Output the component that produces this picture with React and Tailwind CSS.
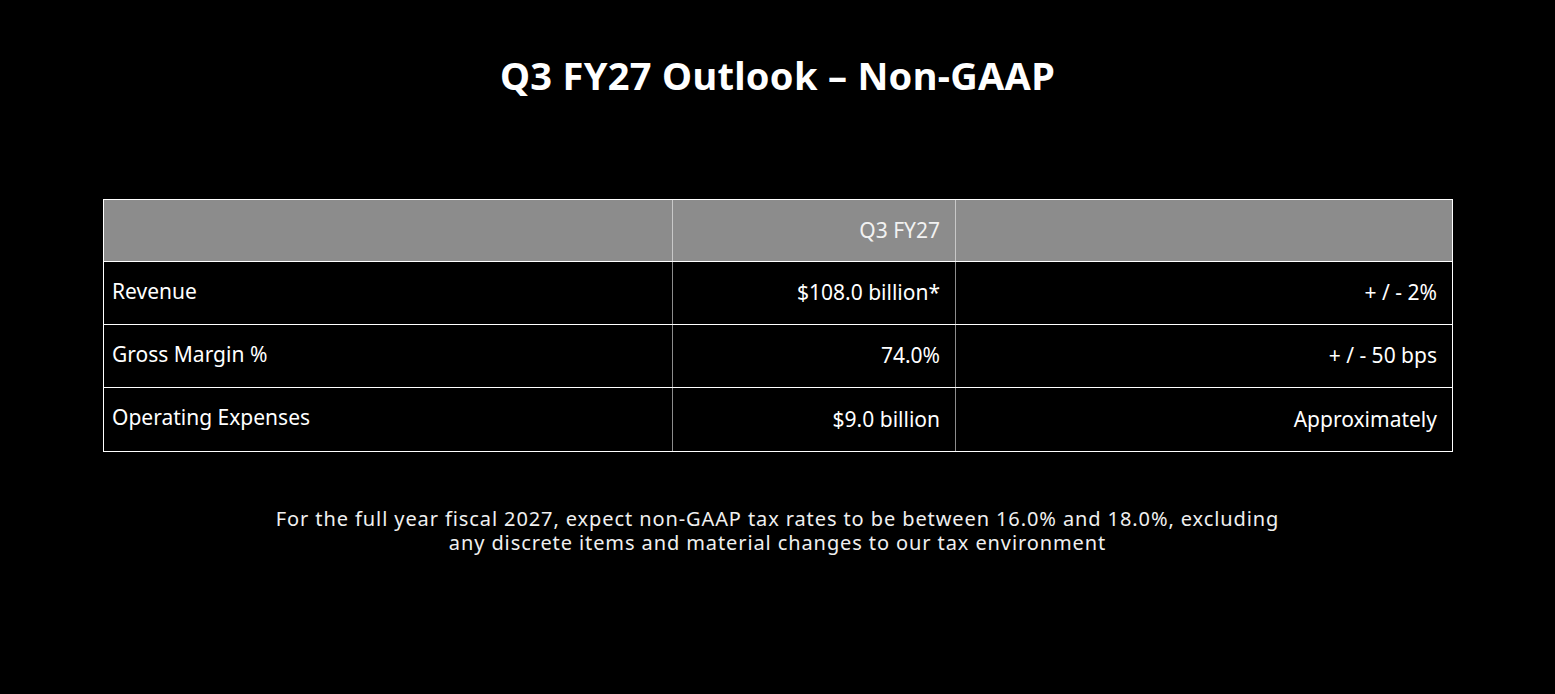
import React from 'react';

const rows = [
  { label: 'Revenue', value: '$108.0 billion*', note: '+ / - 2%' },
  { label: 'Gross Margin %', value: '74.0%', note: '+ / - 50 bps' },
  { label: 'Operating Expenses', value: '$9.0 billion', note: 'Approximately' },
];

export default function App() {
  return (
    <div className="min-h-[694px] w-full bg-black text-white font-['Noto_Sans','Liberation_Sans',sans-serif]">
      <h1 className="pt-[52px] text-center text-[38px] font-bold leading-[46px] tracking-[0.3px]">
        Q3 FY27 Outlook – Non-GAAP
      </h1>

      {/* outlook table */}
      <div className="mt-[101px] ml-[103px] w-[1350px] border border-white">
        <div className="grid grid-cols-[569px_283px_1fr] h-[62px] bg-[#8c8c8c] border-b border-white">
          <div className="border-r border-[#c8c8c8]" />
          <div className="border-r border-[#c8c8c8] flex items-center justify-end pr-[15px] text-[21px] text-[#f2f2f2]">
            Q3 FY27
          </div>
          <div />
        </div>
        {rows.map((r, i) => (
          <div
            key={r.label}
            className={`grid grid-cols-[569px_283px_1fr] h-[63px] ${i < rows.length - 1 ? 'border-b border-white' : ''}`}
          >
            <div className="border-r border-[#8c8c8c] flex items-center pl-[8px] pb-[3px] text-[21px]">{r.label}</div>
            <div className="border-r border-[#8c8c8c] flex items-center justify-end pr-[15px] text-[21px]">{r.value}</div>
            <div className="flex items-center justify-end pr-[15px] text-[21px]">{r.note}</div>
          </div>
        ))}
      </div>

      <p className="mt-[55px] mx-auto w-[1200px] text-center text-[20px] leading-[24px] tracking-[0.9px] text-[#f0f0f0]">
        For the full year fiscal 2027, expect non-GAAP tax rates to be between 16.0% and 18.0%, excluding
        <br />
        any discrete items and material changes to our tax environment
      </p>
    </div>
  );
}
